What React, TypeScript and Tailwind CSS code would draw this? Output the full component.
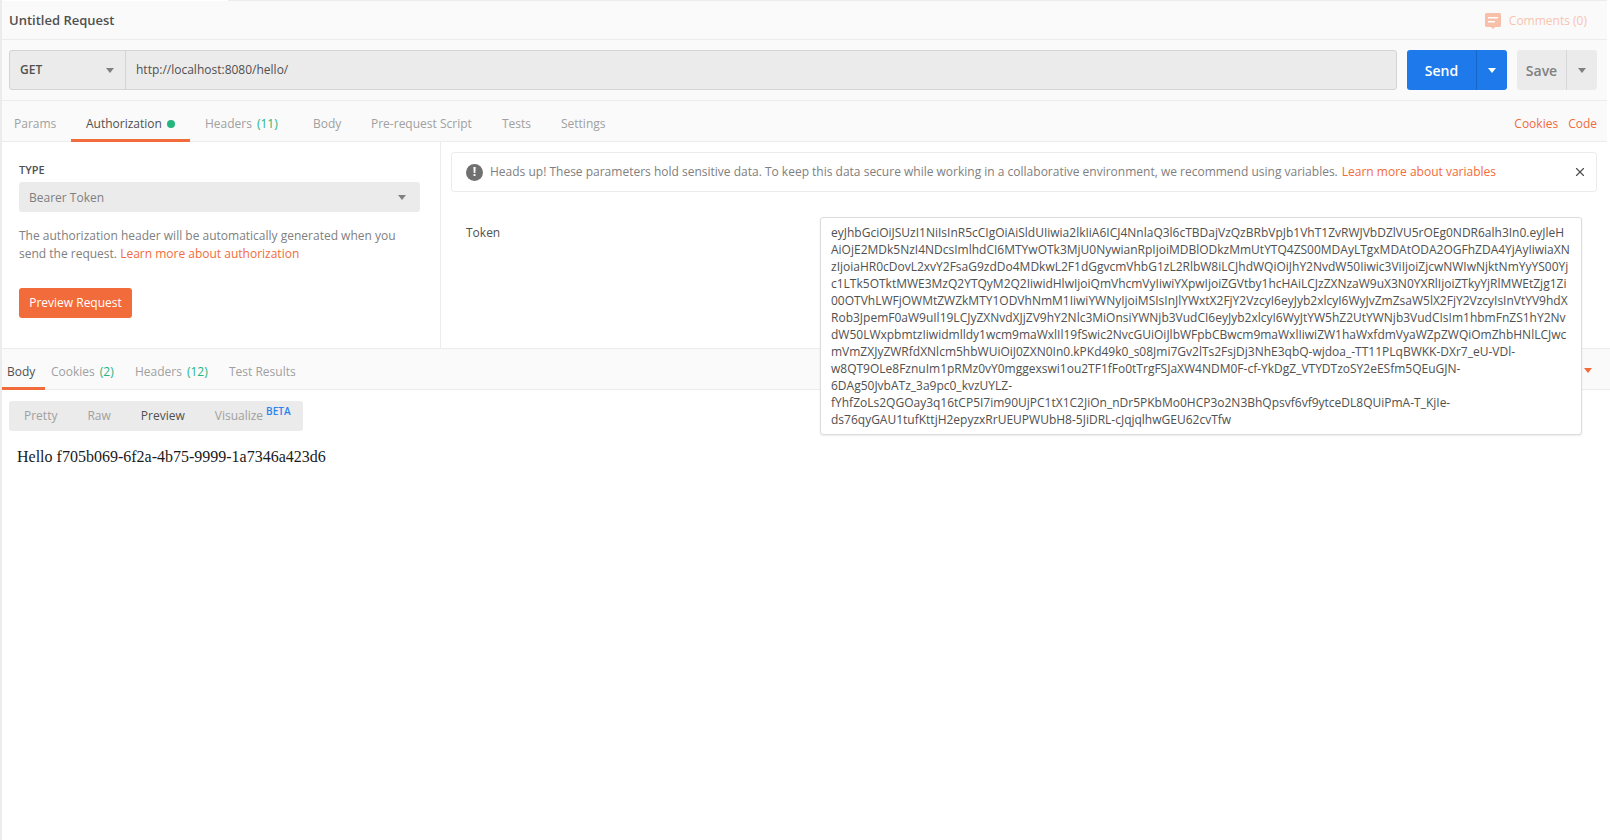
import { X } from 'lucide-react'

const TOKEN_LINES = [
  'eyJhbGciOiJSUzI1NiIsInR5cCIgOiAiSldUIiwia2lkIiA6ICJ4NnlaQ3l6cTBDajVzQzBRbVpJb1VhT1ZvRWJVbDZlVU5rOEg0NDR6alh3In0.eyJleH',
  'AiOjE2MDk5NzI4NDcsImlhdCI6MTYwOTk3MjU0NywianRpIjoiMDBlODkzMmUtYTQ4ZS00MDAyLTgxMDAtODA2OGFhZDA4YjAyIiwiaXN',
  'zIjoiaHR0cDovL2xvY2FsaG9zdDo4MDkwL2F1dGgvcmVhbG1zL2RlbW8iLCJhdWQiOiJhY2NvdW50Iiwic3ViIjoiZjcwNWIwNjktNmYyYS00Yj',
  'c1LTk5OTktMWE3MzQ2YTQyM2Q2IiwidHlwIjoiQmVhcmVyIiwiYXpwIjoiZGVtby1hcHAiLCJzZXNzaW9uX3N0YXRlIjoiZTkyYjRlMWEtZjg1Zi',
  '00OTVhLWFjOWMtZWZkMTY1ODVhNmM1IiwiYWNyIjoiMSIsInJlYWxtX2FjY2VzcyI6eyJyb2xlcyI6WyJvZmZsaW5lX2FjY2VzcyIsInVtYV9hdX',
  'Rob3JpemF0aW9uIl19LCJyZXNvdXJjZV9hY2Nlc3MiOnsiYWNjb3VudCI6eyJyb2xlcyI6WyJtYW5hZ2UtYWNjb3VudCIsIm1hbmFnZS1hY2Nv',
  'dW50LWxpbmtzIiwidmlldy1wcm9maWxlIl19fSwic2NvcGUiOiJlbWFpbCBwcm9maWxlIiwiZW1haWxfdmVyaWZpZWQiOmZhbHNlLCJwc',
  'mVmZXJyZWRfdXNlcm5hbWUiOiJ0ZXN0In0.kPKd49k0_s08Jmi7Gv2lTs2FsjDj3NhE3qbQ-wjdoa_-TT11PLqBWKK-DXr7_eU-VDl-',
  'w8QT9OLe8FznuIm1pRMz0vY0mggexswi1ou2TF1fFo0tTrgFSJaXW4NDM0F-cf-YkDgZ_VTYDTzoSY2eESfm5QEuGJN-',
  '6DAg50JvbATz_3a9pc0_kvzUYLZ-',
  'fYhfZoLs2QGOay3q16tCP5I7im90UjPC1tX1C2JiOn_nDr5PKbMo0HCP3o2N3BhQpsvf6vf9ytceDL8QUiPmA-T_KjIe-',
  'ds76qyGAU1tufKttjH2epyzxRrUEUPWUbH8-5JiDRL-cJqjqlhwGEU62cvTfw'
]

function Caret({ className }: { className: string }): React.JSX.Element {
  return (
    <svg viewBox="0 0 8 5" className={`h-[5px] w-2 ${className}`}>
      <path d="M0 0h8L4 5z" fill="currentColor" />
    </svg>
  )
}

export default function App(): React.JSX.Element {
  return (
    <div
      className="relative flex h-[840px] w-[1610px] flex-col overflow-hidden border-l-2 border-[#ececec] bg-white text-xs text-[#808080]"
      style={{ fontFamily: '"Open Sans", sans-serif' }}
    >
      {/* Title row */}
      <div className="mr-[3px] flex h-10 shrink-0 items-center justify-between border-t border-b border-[#ececec] bg-[#fafafa] pl-[7px] pr-5 pt-[2px]">
        <span className="text-[13px] font-semibold text-[#505050]">Untitled Request</span>
        <div className="flex items-center gap-2 text-[#f8c4b0]">
          <svg viewBox="0 0 16 16" className="h-4 w-4">
            <path
              d="M0 1.5C0 .7.7 0 1.5 0h13c.8 0 1.5.7 1.5 1.5v11c0 .8-.7 1.5-1.5 1.5H10l-2 2-2-2H1.5C.7 14 0 13.3 0 12.5z"
              fill="#f8bfa9"
            />
            <path d="M3 4h10v1.6H3zM3 8h7v1.6H3z" fill="#fff" />
          </svg>
          <span className="text-[12px]">Comments (0)</span>
        </div>
      </div>

      {/* URL row */}
      <div className="mr-[3px] flex h-[61px] shrink-0 items-center border-b border-[#ececec] bg-[#fafafa] pl-[7px] pr-[10px]">
        <div className="flex h-10 flex-1 rounded-[3px] border border-[#d4d4d4] bg-[#ebebeb]">
          <div className="flex w-[116px] items-center justify-between border-r border-[#d4d4d4] pl-[10px] pr-[11px]">
            <span className="text-[12px] font-semibold text-[#505050]">GET</span>
            <Caret className="text-[#808080]" />
          </div>
          <div className="flex items-center pl-[10px] text-[12px] text-[#505050]">http://localhost:8080/hello/</div>
        </div>
        <div className="ml-[10px] flex h-10 w-[100px] rounded-[3px] bg-[#1e7aeb] text-white">
          <div className="flex flex-1 items-center justify-center border-r border-[#1466c8] pt-[2px] text-[14px] font-semibold">Send</div>
          <div className="flex w-[30px] items-center justify-center">
            <Caret className="text-white" />
          </div>
        </div>
        <div className="ml-[10px] flex h-10 w-20 rounded-[3px] bg-[#ebebeb]">
          <div className="flex flex-1 items-center justify-center border-r border-[#d8d8d8] pt-[2px] text-[14px] font-semibold text-[#808080]">Save</div>
          <div className="flex w-[30px] items-center justify-center">
            <Caret className="text-[#808080]" />
          </div>
        </div>
      </div>

      {/* Request tabs */}
      <div className="mr-[3px] flex h-[41px] shrink-0 items-stretch border-b border-[#ececec] bg-[#fafafa] pr-[10px] text-[12px] text-[#a0a0a0]">
        <div className="flex w-[69px] items-center pl-[12px] pt-[6px]">Params</div>
        <div className="-mb-px flex w-[119px] items-center gap-[5px] border-b-[3px] border-[#f26b3a] pl-[15px] pt-[8px] text-[#505050]">
          Authorization
          <span className="h-2 w-2 rounded-full bg-[#26b47f]" />
        </div>
        <div className="flex w-[118px] items-center pl-[15px] pt-[6px]">
          Headers<span className="ml-[5px] text-[#26b47f]">(11)</span>
        </div>
        <div className="flex w-[61px] items-center pl-[5px] pt-[6px]">Body</div>
        <div className="flex w-[131px] items-center pl-[2px] pt-[6px]">Pre-request Script</div>
        <div className="flex w-[61px] items-center pl-[2px] pt-[6px]">Tests</div>
        <div className="flex items-center pt-[6px]">Settings</div>
        <div className="ml-auto flex items-center gap-[10px] pt-[6px] text-[#f26b3a]">
          <span>Cookies</span>
          <span>Code</span>
        </div>
      </div>

      {/* Authorization panel */}
      <div className="flex h-[207px] shrink-0 border-b border-[#ececec]">
        <div className="w-[439px] shrink-0 border-r border-[#ececec] pl-[17px] pr-[20px] pt-[20px]">
          <div className="text-[11px] font-semibold leading-[16px] text-[#505050]">TYPE</div>
          <div className="mt-1 flex h-[30px] items-center justify-between rounded-[3px] bg-[#ebebeb] pl-[10px] pr-[14px] pt-[1px] text-[12px]">
            Bearer Token
            <Caret className="text-[#808080]" />
          </div>
          <p className="mt-[15px] text-[12px] leading-[18px]">
            The authorization header will be automatically generated when you send the request.{' '}
            <span className="text-[#f26b3a]">Learn more about authorization</span>
          </p>
          <button className="mt-[25px] h-[30px] w-[113px] rounded-[3px] bg-[#f26b3a] text-[12px] text-white">
            Preview Request
          </button>
        </div>
        <div className="flex-1 pl-[10px] pr-[13px] pt-[10px]">
          <div className="flex h-10 items-center rounded-[3px] border border-[#ececec] pl-[14px] pr-[9px] text-[12px]">
            <span className="mr-[7px] flex h-[17px] w-[17px] items-center justify-center rounded-full bg-[#707070] text-[12px] font-bold leading-none text-white">
              !
            </span>
            Heads up! These parameters hold sensitive data. To keep this data secure while working in a collaborative
            environment, we recommend using variables.
            <span className="ml-1 text-[#f26b3a]">Learn more about variables</span>
            <X className="ml-auto h-[14px] w-[14px] text-[#505050]" strokeWidth={2} />
          </div>
          <div className="mt-8 pl-[15px] text-[12px] leading-[18px] text-[#505050]">Token</div>
        </div>
      </div>

      {/* Response tabs */}
      <div className="flex h-[41px] shrink-0 items-stretch border-b border-[#ececec] bg-[#fafafa] pr-[18px] text-[12px] text-[#a0a0a0]">
        <div className="-mb-px -ml-[2px] flex w-[45px] items-center border-b-[3px] border-[#f26b3a] pl-[7px] pt-[7px] text-[#505050]">Body</div>
        <div className="flex w-[82px] items-center pl-[6px] pt-[5px]">
          Cookies<span className="ml-[5px] text-[#26b47f]">(2)</span>
        </div>
        <div className="flex w-[94px] items-center pl-[8px] pt-[5px]">
          Headers<span className="ml-[5px] text-[#26b47f]">(12)</span>
        </div>
        <div className="flex items-center pl-2 pt-[5px]">Test Results</div>
        <div className="ml-auto flex items-center pt-[2px]">
          <Caret className="text-[#f26b3a]" />
        </div>
      </div>

      {/* Response body */}
      <div className="flex-1 pl-[7px] pt-[11px]">
        <div className="flex h-[30px] w-[294px] items-center rounded-[3px] bg-[#ebebeb] text-[12px] text-[#a0a0a0]">
          <span className="ml-[15px]">Pretty</span>
          <span className="ml-[30px]">Raw</span>
          <span className="ml-[30px] text-[#505050]">Preview</span>
          <span className="ml-[30px]">Visualize</span>
          <span className="mb-[9px] ml-[3px] text-[10px] font-semibold text-[#2a83ef]">BETA</span>
        </div>
        <div
          className="mt-[9px] pl-[8px] pt-[8px] text-[16px] leading-[18px] text-[#1a1a1a]"
          style={{ fontFamily: '"Liberation Serif", serif' }}
        >
          Hello f705b069-6f2a-4b75-9999-1a7346a423d6
        </div>
      </div>

      {/* Token field, expanded over the panels below it */}
      <div className="absolute left-[818px] top-[217px] h-[218px] w-[762px] rounded-[3px] border border-[#dcdcdc] bg-white pl-[10px] pt-[6px] text-[12px] leading-[17px] text-[#505050] shadow-[0_1px_2px_rgba(0,0,0,0.08)]">
        {TOKEN_LINES.map((line, i) => (
          <div key={i} className="whitespace-pre">
            {line}
          </div>
        ))}
      </div>

      {/* Active window tab sits over the top line */}
      <div className="absolute left-0 top-0 h-px w-[226px] bg-white" />
    </div>
  )
}
